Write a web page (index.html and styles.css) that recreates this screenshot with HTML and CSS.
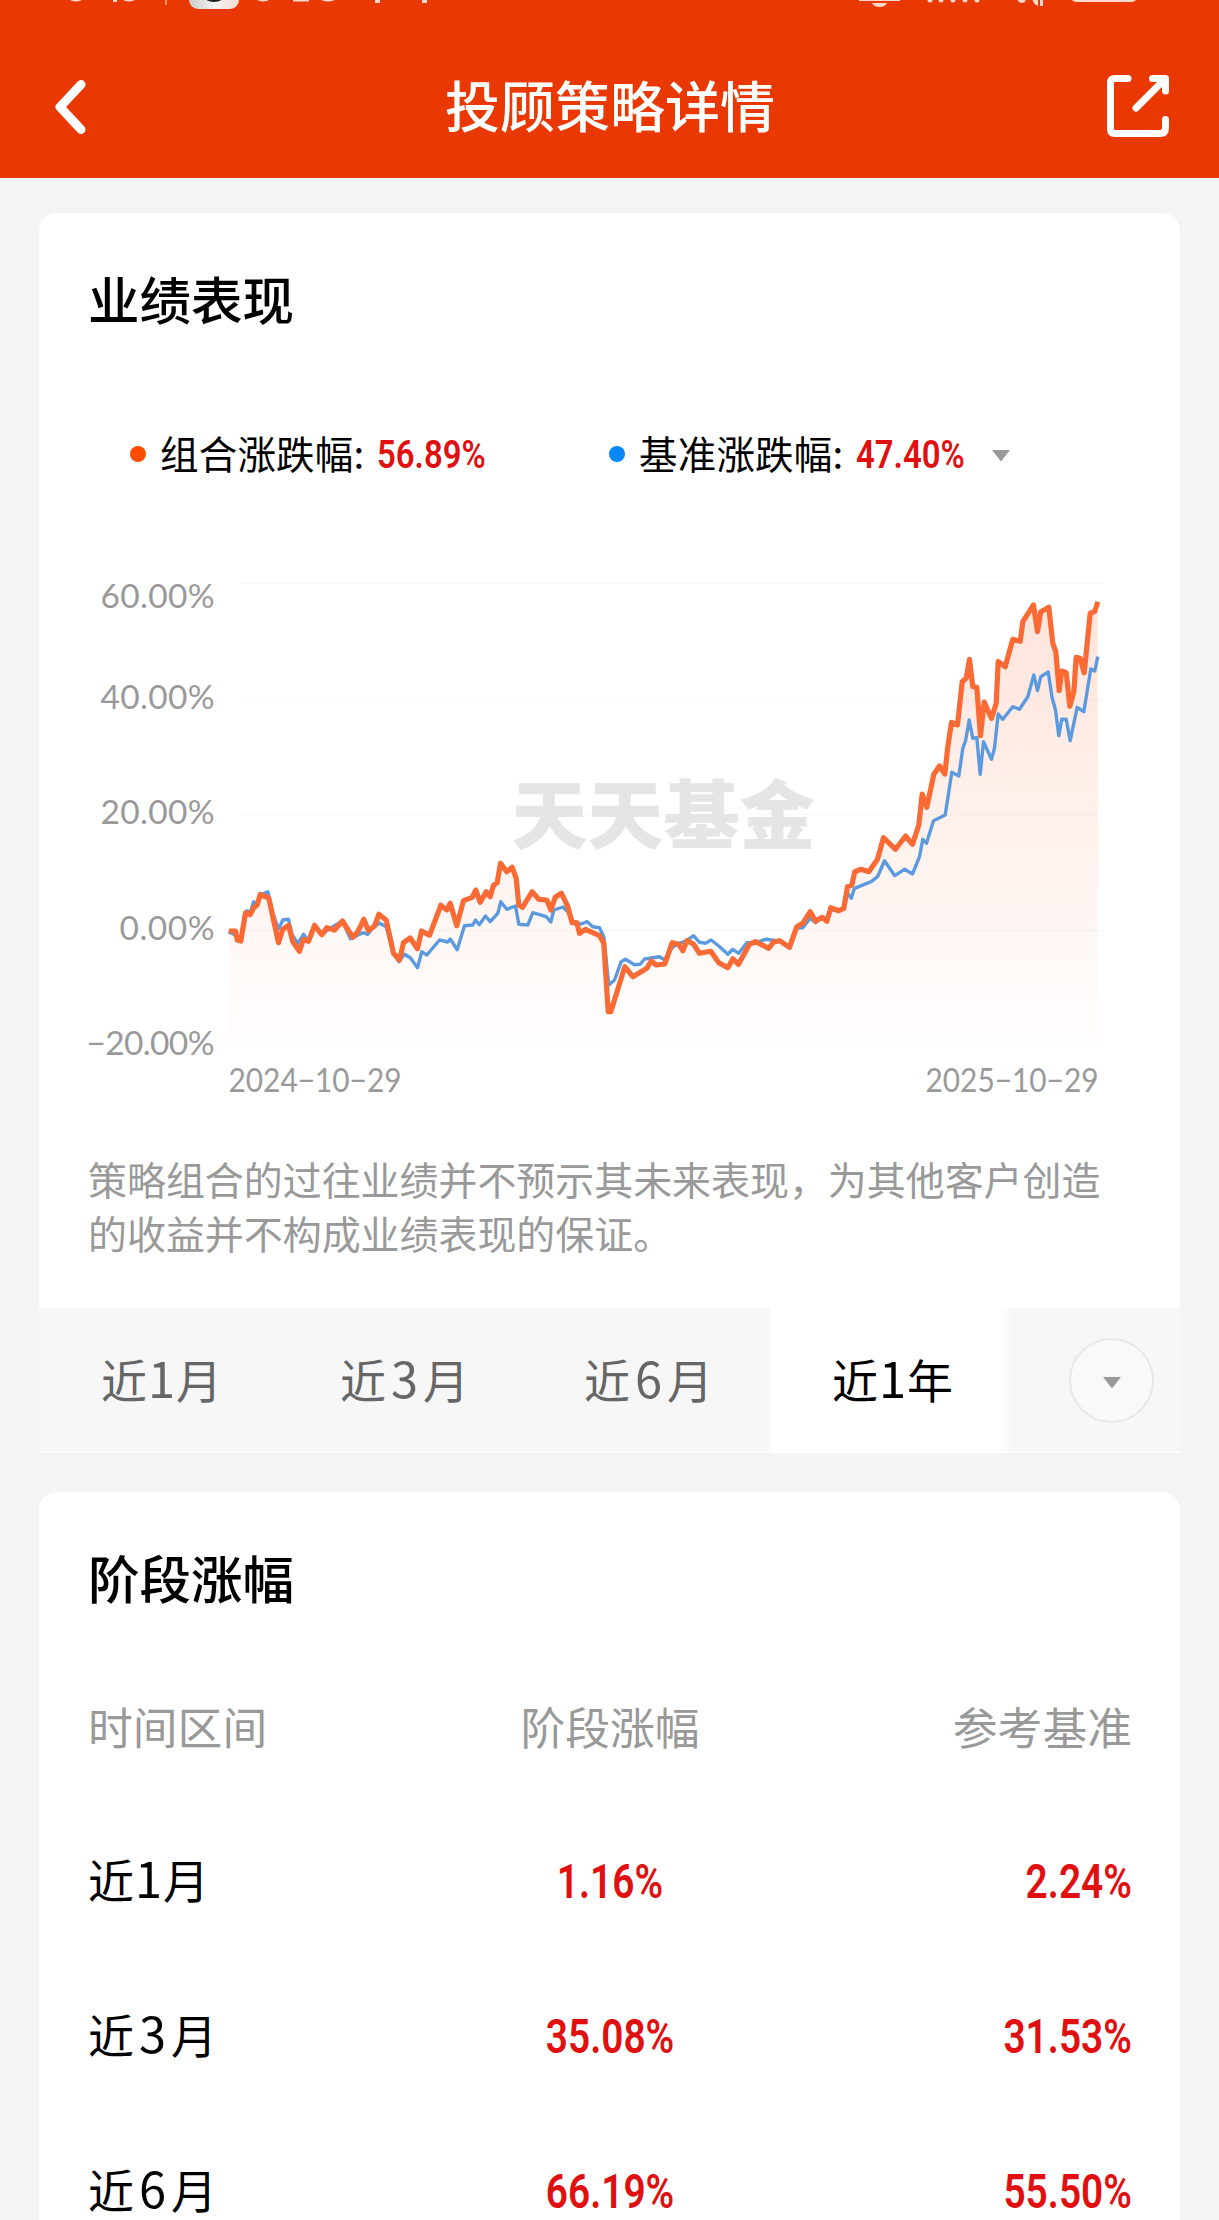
FILE: index.html
```html
<!DOCTYPE html>
<html lang="zh-CN">
<head>
<meta charset="utf-8">
<title>投顾策略详情</title>
<link rel="stylesheet" href="styles.css">
</head>
<body>
<header class="header">
  <svg class="status" viewBox="0 0 1219 10" aria-hidden="true">
    <defs><linearGradient id="badge" x1="0" x2="1"><stop offset="0" stop-color="#c9cccb"/><stop offset=".5" stop-color="#f3f3f1"/><stop offset="1" stop-color="#f5ddd2"/></linearGradient></defs>
    <rect x="189" y="-30" width="50" height="39" rx="9" fill="url(#badge)"/>
    <ellipse cx="214" cy="-4" rx="10" ry="6" fill="#1a2220"/>
    <g fill="#ffd9cb">
      <ellipse cx="76" cy="-1" rx="6" ry="2.5"/><rect x="113" y="0" width="4" height="2"/><ellipse cx="129" cy="-1" rx="6" ry="2.5"/>
      <rect x="165" y="-4" width="2" height="9" opacity=".55"/>
      <ellipse cx="263" cy="-1" rx="6" ry="2.5"/><rect x="293" y="0" width="16" height="1.5"/><ellipse cx="328" cy="-1" rx="7" ry="2.5"/>
      <rect x="375" y="-4" width="5" height="7"/><rect x="422" y="-4" width="5" height="7"/>
      <rect x="859" y="-1" width="41" height="2"/><path d="M872 3h15q-2 4-7.500 4T872 3z"/>
      <circle cx="930" cy="0" r="2.500"/><circle cx="941" cy="0" r="2.500"/><circle cx="953" cy="0" r="2.500"/><circle cx="965" cy="0" r="2.500"/><circle cx="977" cy="0" r="2.500"/>
      <path d="M1017-2h9q0 5-4 5t-5-5zM1032-2h6v8q-5-2-6-8zM1040-2h3v8h-3z"/>
      <rect x="1071" y="-10" width="66" height="12" rx="5"/>
    </g>
  </svg>
  <div class="navbar">
    <svg class="back" viewBox="0 0 32 56" aria-label="返回"><path d="M26 5.500 5 28 26 50.500"/></svg>
    <h1 class="title">投顾策略详情</h1>
    <svg class="share" viewBox="0 0 64 64" aria-label="分享"><path d="M22 4.500H9Q4.500 4.500 4.500 9V55Q4.500 59.500 9 59.500H54Q59.500 59.500 59.500 54V45.500M46.500 4.500H59.500V17M59 5 30 34"/></svg>
  </div>
</header>

<main class="content">
  <section class="card">
    <h2 class="card-title">业绩表现</h2>
    <div class="legend">
      <div class="legend-item first"><i class="dot orange"></i><span class="name">组合涨跌幅:</span><b class="pct">56.89%</b></div>
      <div class="legend-item"><i class="dot blue"></i><span class="name">基准涨跌幅:</span><b class="pct">47.40%</b><svg class="caret" viewBox="0 0 22 14"><path d="M2 1H20L11 12.500z"/></svg></div>
    </div>
    <svg class="chart" viewBox="39.500 560 1140 540">
      <defs><linearGradient id="area" gradientUnits="userSpaceOnUse" x1="0" y1="600" x2="0" y2="1046"><stop offset="0" stop-color="#ff6a36" stop-opacity=".18"/><stop offset="1" stop-color="#ff6a36" stop-opacity=".01"/></linearGradient></defs>
      <path class="grid" d="M240 583.500H1104M240 699.500H1104M240 814.500H1104M240 930.500H1104M240 1046.500H1104"/>
      <text class="mark" x="512" y="843" textLength="304" lengthAdjust="spacingAndGlyphs">天天基金</text>
      <path class="area" fill="url(#area)" d="M229.300 931 236 931 237.700 940 241.300 941 246 913 250.700 914.500 254 908 257.700 905 260.700 894.500 269.300 898 279 942.700 283.300 929.300 289 925.300 293.300 941.700 300 951.300 304 939.300 309 941.300 315 925.300 322.300 934.700 327.300 927.700 335 930 343 921 353.300 937.300 358.300 931.700 364.300 919.300 369 930.700 375 926 379.300 914.300 386.700 920 394 953.300 400 960 404 942.700 410.700 938 418 948.700 422 931 430 935.300 441.300 905.300 447.300 910 450.700 903.300 457.300 925.700 464 900.700 472.700 897.300 476.300 890 480.700 902.300 486.700 891.700 490.700 896.700 494 885.300 497.700 882.700 501 863.300 507.300 871.700 512.700 867.300 516.700 878.300 519.300 905 523 907.300 532.700 891.700 539.300 899.300 547.300 900 551.300 910 555.700 897.300 562 893.300 568.300 906.700 572.700 922.700 577.300 922.700 580 933.300 586 929.300 600 935.700 604.300 943.300 608.700 1011.700 611.300 1011.700 625.300 966.700 633.300 976.700 647.300 968.300 651.700 961 656.700 965 665.300 964 672.700 942.700 679.300 944.300 683.300 950.700 687.300 940.700 694 944 700 953.300 711.300 951.300 719.300 962.700 728.300 967.700 733.300 958.700 739 964.300 750 944.300 756 941.700 769.300 948.300 774 942 780 940.700 790 947.300 797.300 926.700 803.300 923.300 810.700 911.700 816 921.300 822.700 917.300 827.300 921.300 831.300 907.700 839.300 910.700 844.300 908.300 848 886.700 852.300 885 855.300 871.700 861.700 869.300 869.300 871.700 878 859.300 884 837.700 896 849.300 906 836 913 844.300 919.300 825 922.700 794 927.300 807.300 934.300 774.300 940 766 945.300 774 948.300 746.700 952 722.300 958 725 962.700 681.700 966.700 678.300 970 659.300 973.300 686.700 977.300 687.300 981 735.700 984.700 702 992 718.300 996.700 703.300 998.700 661.700 1005.700 666.700 1013.300 639.300 1020.700 641.300 1023.300 621.700 1034 605 1038 631.700 1041.300 611.700 1049.300 607.300 1053.300 643.300 1056.300 651.700 1059.700 690.700 1062.300 671 1066.700 672.700 1070.300 706.300 1074.300 691.700 1076.700 657.300 1080.700 658.300 1084.700 672.700 1090.700 613.300 1095.300 611.300 1098.300 601.700V1046H229.300Z"/>
      <polyline class="line benchmark" points="229,932 236,935 241,940 247,911 251,912 254,902 258,903 261,895 268.300,891.700 273.300,913 279,929.300 283.300,920 289,919.300 292.700,935 298.300,943.300 304,934.300 309,941 315,926 322,934 335,925.700 343,921 351,938.700 363.300,932.700 368.300,934.300 374,926.700 380,923.300 386.700,926.700 394,953 399.300,961.700 405,954.300 411,958 418,967.700 422.300,951.700 427.300,955 440,940 448.300,942 450.700,939 457.700,949.700 465,925.700 473.300,925 476,920 479.700,924.700 486,916 490.700,921.700 498.300,913.300 501.300,901.700 507.300,909.300 516,906 519.300,924.300 528.300,925 533.300,912.700 546.700,916.700 551.300,922 554.300,910 563.300,907 568.300,911.700 572.700,922.300 581.700,924 587.700,921.700 593.300,926.700 600,927.700 604.300,936.700 609.300,985 615,980 621.700,961.700 626,959.300 635,964.700 640.700,964.300 645,959 660,956.700 665.300,960 672.700,947.700 679.300,943.300 686.700,941 694,935.700 700,942.300 706,943.300 711.700,940 719.300,946 728.300,954.300 733.300,949.300 739.300,953.300 747.300,942.700 756,942.700 766,939.300 780,941 790,947 797,928 803.300,927.700 810.700,918.300 816,922.700 823,917 827,920 831,909 839,911 844,909 848,893.300 851.700,898.300 855,888.300 871.700,881.700 878,876.700 885,860.700 895.300,875.700 905,869.300 913,874 920,856.700 923.300,839.300 927,843.300 934,820.700 945.700,815 952.300,772.300 959.300,776 963.300,748.300 966,741 969.700,720 973.300,738.300 977.300,737.700 980.700,774.300 984,741.700 992,759.300 995,748.300 998.700,714 1003.300,719.300 1013.300,706.700 1020,709.300 1028.300,696.700 1034.300,675 1038,690.700 1041.300,676.700 1048.700,672 1052.700,698.300 1056,710 1059.300,735.700 1062.300,719.300 1066.700,719.300 1070.700,740.700 1077.700,707.300 1084.300,711.700 1091.300,669 1095.300,671 1098.300,656.700"/>
      <polyline class="line portfolio" points="229.300,931 236,931 237.700,940 241.300,941 246,913 250.700,914.500 254,908 257.700,905 260.700,894.500 269.300,898 279,942.700 283.300,929.300 289,925.300 293.300,941.700 300,951.300 304,939.300 309,941.300 315,925.300 322.300,934.700 327.300,927.700 335,930 343,921 353.300,937.300 358.300,931.700 364.300,919.300 369,930.700 375,926 379.300,914.300 386.700,920 394,953.300 400,960 404,942.700 410.700,938 418,948.700 422,931 430,935.300 441.300,905.300 447.300,910 450.700,903.300 457.300,925.700 464,900.700 472.700,897.300 476.300,890 480.700,902.300 486.700,891.700 490.700,896.700 494,885.300 497.700,882.700 501,863.300 507.300,871.700 512.700,867.300 516.700,878.300 519.300,905 523,907.300 532.700,891.700 539.300,899.300 547.300,900 551.300,910 555.700,897.300 562,893.300 568.300,906.700 572.700,922.700 577.300,922.700 580,933.300 586,929.300 600,935.700 604.300,943.300 608.700,1011.700 611.300,1011.700 625.300,966.700 633.300,976.700 647.300,968.300 651.700,961 656.700,965 665.300,964 672.700,942.700 679.300,944.300 683.300,950.700 687.300,940.700 694,944 700,953.300 711.300,951.300 719.300,962.700 728.300,967.700 733.300,958.700 739,964.300 750,944.300 756,941.700 769.300,948.300 774,942 780,940.700 790,947.300 797.300,926.700 803.300,923.300 810.700,911.700 816,921.300 822.700,917.300 827.300,921.300 831.300,907.700 839.300,910.700 844.300,908.300 848,886.700 852.300,885 855.300,871.700 861.700,869.300 869.300,871.700 878,859.300 884,837.700 896,849.300 906,836 913,844.300 919.300,825 922.700,794 927.300,807.300 934.300,774.300 940,766 945.300,774 948.300,746.700 952,722.300 958,725 962.700,681.700 966.700,678.300 970,659.300 973.300,686.700 977.300,687.300 981,735.700 984.700,702 992,718.300 996.700,703.300 998.700,661.700 1005.700,666.700 1013.300,639.300 1020.700,641.300 1023.300,621.700 1034,605 1038,631.700 1041.300,611.700 1049.300,607.300 1053.300,643.300 1056.300,651.700 1059.700,690.700 1062.300,671 1066.700,672.700 1070.300,706.300 1074.300,691.700 1076.700,657.300 1080.700,658.300 1084.700,672.700 1090.700,613.300 1095.300,611.300 1098.300,601.700"/>
      <g class="axis">
        <text x="101" y="608" textLength="114">60.00%</text>
        <text x="101" y="709" textLength="114">40.00%</text>
        <text x="101" y="824" textLength="114">20.00%</text>
        <text x="120" y="939.500" textLength="95">0.00%</text>
        <text x="87" y="1055" textLength="128">−20.00%</text>
        <text x="229" y="1092" textLength="173" lengthAdjust="spacingAndGlyphs">2024−10−29</text>
        <text x="926" y="1092" textLength="173" lengthAdjust="spacingAndGlyphs">2025−10−29</text>
      </g>
    </svg>
    <p class="note">策略组合的过往业绩并不预示其未来表现，为其他客户创造的收益并不构成业绩表现的保证。</p>
    <nav class="tabs">
      <span class="tab t1">近<em>1</em>月</span>
      <span class="tab t3">近<em class="wide">3</em>月</span>
      <span class="tab t6">近<em class="wide">6</em>月</span>
      <span class="tab active">近<em>1</em>年</span>
      <span class="more"><span class="circle"><svg class="caret" viewBox="0 0 22 14"><path d="M2 1H20L11 12.500z"/></svg></span></span>
    </nav>
  </section>

  <section class="card periods">
    <h2 class="card-title">阶段涨幅</h2>
    <div class="row head"><span>时间区间</span><span>阶段涨幅</span><span>参考基准</span></div>
    <div class="row"><span class="label">近<em>1</em>月</span><b class="num">1.16%</b><b class="num">2.24%</b></div>
    <div class="row"><span class="label">近<em class="wide">3</em>月</span><b class="num">35.08%</b><b class="num">31.53%</b></div>
    <div class="row"><span class="label">近<em class="wide">6</em>月</span><b class="num">66.19%</b><b class="num">55.50%</b></div>
  </section>
</main>
</body>
</html>
```
FILE: styles.css
```css
* { box-sizing: border-box; }
html { overflow: hidden; }
body {
  margin: 0;
  width: 1219px;
  height: 2220px;
  overflow: hidden;
  background: #f4f4f5;
  color: #000;
  font-family: "Noto Sans CJK SC", sans-serif;
}
h1, h2, p { margin: 0; font-weight: 500; }
em { font-style: normal; font-size: 1.06em; line-height: 1; padding: 0 1px; }
em.wide { padding: 0 5px; }
svg { display: block; }

.header { height: 178px; background: #e93802; }
.status { width: 1219px; height: 10px; }
.navbar {
  height: 167px;
  padding: 0 49px 0 55px;
  display: flex;
  align-items: center;
  justify-content: space-between;
}
.back, .share { fill: none; stroke: #fff; stroke-linecap: round; stroke-linejoin: round; }
.back { width: 32px; height: 56px; stroke-width: 9px; margin-bottom: -27px; }
.share { width: 64px; height: 64px; stroke-width: 7px; margin-bottom: -25px; }
.title { color: #fff; font-size: 55px; line-height: 80px; margin: 18px 0 0 27px; }

.content { padding: 35px 39px 0; }
.card { width: 1141px; background: #fff; border-radius: 18px 18px 0 0; overflow: hidden; }
.card-title { padding: 45px 0 0 49px; font-size: 51.500px; line-height: 80px; }

.legend { display: flex; height: 56px; margin-top: 89px; padding-left: 90px; font-size: 38.500px; }
.legend-item { display: flex; align-items: center; width: 479px; }
.dot { width: 16px; height: 16px; border-radius: 50%; margin: -2px 14px 0 1px; }
.orange { background: #fd4c00; }
.blue { background: #0788fa; }
.name { width: 217px; margin-top: -6px; white-space: nowrap; letter-spacing: .2px; }
.pct, .num { font-family: Roboto, "Liberation Sans", sans-serif; font-weight: 600; color: #e01010; white-space: nowrap; }
.pct { font-size: 38px; width: 134px; transform: scaleX(.865); transform-origin: left center; }
.caret { width: 22px; height: 14px; fill: #999; flex: none; margin-top: 1px; }

.chart { width: 1140px; height: 540px; margin-top: 77px; }
.grid { stroke: #f9f9f9; stroke-width: 1.500; fill: none; }
.mark { font-size: 75px; font-weight: 900; fill: #e5e5e5; }
.line { fill: none; stroke-linejoin: round; }
.benchmark { stroke: #5c9ae0; stroke-width: 3.400; }
.portfolio { stroke: #fa6a35; stroke-width: 5.200; }
.axis text { font-family: Lato, sans-serif; font-size: 33.500px; fill: #999; }

.note { padding: 51px 0 0 49px; width: 1090px; font-size: 38.950px; line-height: 54px; font-weight: 400; color: #999; }

.tabs { display: flex; height: 145px; margin-top: 49px; background: #f7f7f7; border-bottom: 2px solid #fff; }
.tab { display: flex; align-items: center; font-size: 46px; color: #666; padding-bottom: 4px; }
.tab.t1 { width: 239px; padding-left: 62px; }
.tab.t3 { width: 244px; padding-left: 62px; }
.tab.t6 { width: 248px; padding-left: 62px; }
.tab.active { width: 229px; padding-left: 62px; background: #fff; color: #000; }
.more { flex: 1; display: flex; align-items: center; justify-content: flex-end; padding-right: 26px; background: linear-gradient(90deg, #fff 0, #f7f7f7 14px); }
.circle { width: 85px; height: 85px; border: 2px solid #e8e8e8; border-radius: 50%; background: #f9f9f9; display: flex; align-items: center; justify-content: center; margin-top: 2px; }
.circle .caret { margin-top: 5px; }

.periods { height: 760px; margin-top: 39px; }
.row { display: grid; grid-template-columns: 1fr 1fr 1fr; height: 154.900px; padding: 0 48px 0 49px; align-items: center; font-size: 46px; }
.row > :nth-child(2) { text-align: center; }
.row > :nth-child(3) { text-align: right; }
.row.head { color: #999; margin-top: 31px; font-size: 44.800px; }
.label { margin-top: -4px; }
.num { font-size: 48px; margin-top: 2px; transform: scaleX(.81); transform-origin: center; }
.row > .num:nth-child(3) { transform-origin: right center; }
```
